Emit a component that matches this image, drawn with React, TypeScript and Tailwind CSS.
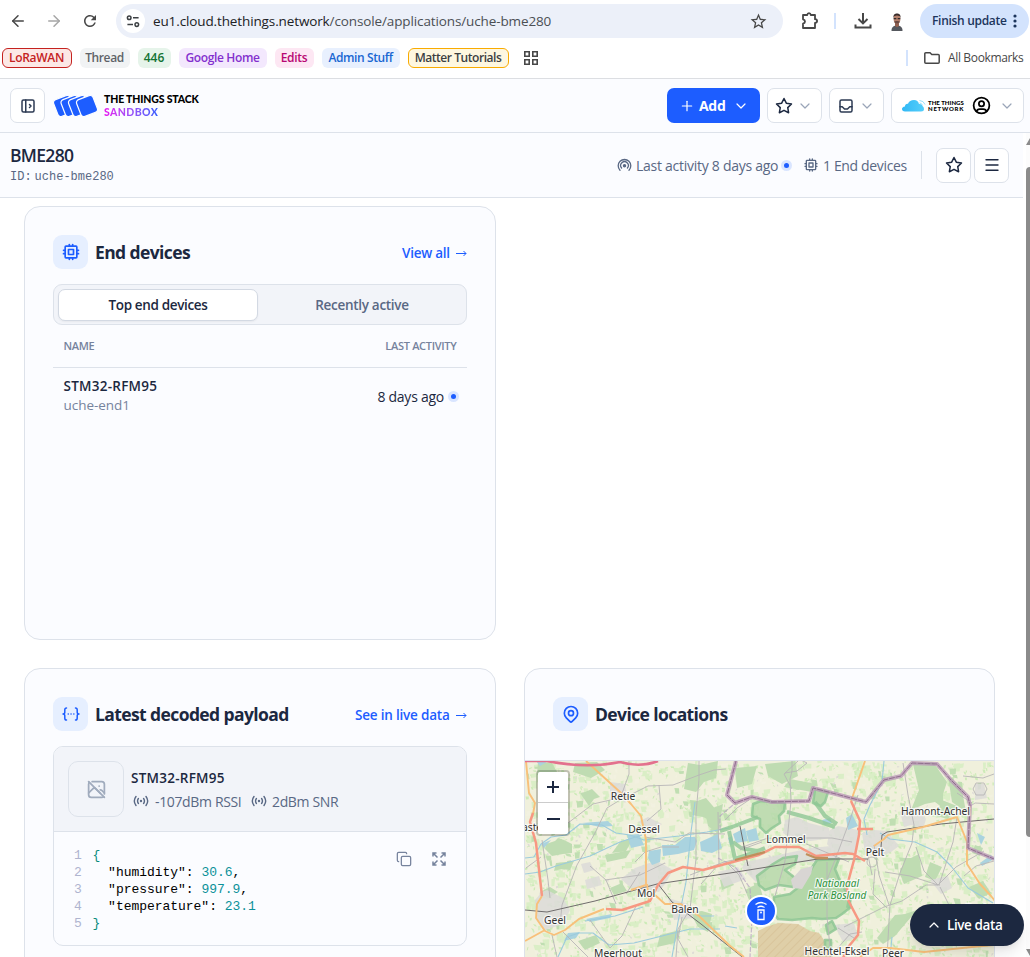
import React from "react";
import { ArrowLeft, ArrowRight, ChevronDown, ChevronUp, Copy, Menu, Plus } from "lucide-react";
import { TbCpu, TbInbox, TbLayoutSidebarLeftExpand, TbMapPin, TbPhotoOff, TbStar, TbUserCircle } from "react-icons/tb";
import { MdRefresh, MdStarBorder } from "react-icons/md";

const line = "border-[#dde2ea]";

function TuneIcon() {
  return (
    <svg width="14" height="14" viewBox="0 0 14 14" fill="none" stroke="#3c4043" strokeWidth="1.5">
      <circle cx="3.2" cy="3.8" r="1.8" />
      <path d="M7 3.8h5.6M1.4 10.6H7" />
      <circle cx="10.8" cy="10.6" r="1.8" />
    </svg>
  );
}

function Avatar() {
  return (
    <svg width="14" height="18" viewBox="0 0 14 18">
      <path d="M1.5 18c-.3-3 1.2-5 4-5.6h3c2.800.6 4.300 2.600 4 5.600z" fill="#55585e" />
      <path d="M5 9h4v4l-2 1.200L5 13z" fill="#93604f" />
      <ellipse cx="7" cy="6" rx="3.400" ry="4.700" fill="#b5806c" />
      <path d="M3.500 5C3 1.500 5 .4 7 .4s4 1.100 3.500 4.600L9.800 3.200Q7 2 4.200 3.200z" fill="#3a2c2b" />
      <path d="M3.700 5.700h2.600M7.700 5.700h2.600" stroke="#302a2c" strokeWidth="1.200" />
      <path d="M4.200 8.500c.8 3 4.800 3 5.600 0L8 8H6z" fill="#6b4a42" />
    </svg>
  );
}

function BrowserBar() {
  return (
    <div className="flex h-[42px] shrink-0 items-center">
      <div className="flex w-[116px] shrink-0 items-center">
        <ArrowLeft className="ml-[9px] text-[#474747]" size={18} strokeWidth={2} />
        <ArrowRight className="ml-[18px] text-[#a6a6a6]" size={18} strokeWidth={2} />
        <MdRefresh className="ml-[18px] text-[#474747]" size={18} />
      </div>
      <div className="flex h-[34px] w-[667px] shrink-0 items-center rounded-full bg-[#ecf0f9] pl-[5px]">
        <div className="flex h-6 w-6 items-center justify-center rounded-full bg-white"><TuneIcon /></div>
        <div className="ml-[8px] w-[596px] text-[13.500px] tracking-[-0.12px] whitespace-nowrap text-[#4b4f54]">
          <span className="text-[#202124]">eu1.cloud.thethings.network</span>/console/applications/uche-bme280
        </div>
        <MdStarBorder className="text-[#474747]" size={19} />
      </div>
      <svg className="ml-[18px] shrink-0" width="18" height="18" viewBox="0 0 18 18" fill="none" stroke="#474747" strokeWidth="1.800" strokeLinejoin="round">
        <path d="M2 3h4.200q.3-1.900 1.800-1.900T9.800 3H14v4.200q2.100.2 2.100 1.900T14 11v5H2v-4.300q2-.5 2-2.200T2 7.300z" />
      </svg>
      <div className="ml-[15px] h-4 w-[2px] shrink-0 bg-[#d3e3fd]" />
      <svg className="ml-[18px] shrink-0" width="18" height="18" viewBox="0 0 18 18" fill="none" stroke="#474747" strokeWidth="2">
        <path d="M9 1v10M4.500 7 9 11.400 13.500 7M1.500 12.500V15.500h15v-3" />
      </svg>
      <div className="ml-[18px] shrink-0 pt-[2px]"><Avatar /></div>
      <div className="ml-[16px] flex h-[34px] w-[109px] shrink-0 items-center rounded-full bg-[#d3e3fd] pl-3">
        <div className="w-[79px] text-[12px] tracking-[-0.3px] font-semibold whitespace-nowrap text-[#1c355c]">Finish update</div>
        <svg width="4" height="14" className="ml-[2px]" fill="#1c355c"><circle cx="2" cy="2" r="1.600" /><circle cx="2" cy="7" r="1.600" /><circle cx="2" cy="12" r="1.600" /></svg>
      </div>
    </div>
  );
}

const bookmarks: [string, string][] = [
  ["LoRaWAN", "w-[70px] border border-[#c5221f] bg-[#fce8e6] text-[#c5221f] tracking-[-0.3px]"],
  ["Thread", "w-[50px] bg-[#f1f3f4] text-[#5f6368] tracking-[-0.4px]"],
  ["446", "w-[33px] bg-[#e6f4ea] text-[#137333]"],
  ["Google Home", "w-[88px] bg-[#f3e8fd] text-[#8430ce] tracking-[-0.35px]"],
  ["Edits", "w-[39px] bg-[#fde7f3] text-[#b80672] tracking-[-0.3px]"],
  ["Admin Stuff", "w-[78px] bg-[#e8f0fe] text-[#1967d2] tracking-[-0.4px]"],
  ["Matter Tutorials", "w-[101px] border border-[#f9ab00] bg-[#fef7e0] text-[#3c4043] tracking-[-0.45px]"],
];

function Bookmarks() {
  return (
    <div className="flex h-[37px] shrink-0 items-start border-b border-[#dcdee2] pt-[6px] pl-[2px] text-[12px] whitespace-nowrap">
      <div className="flex gap-2 font-semibold">
        {bookmarks.map(([t, c]) => (
          <div key={t} className={"flex h-5 items-center justify-center rounded-[6px] pr-px " + c}>{t}</div>
        ))}
      </div>
      <svg className="mt-[3px] ml-[15px] shrink-0" width="14" height="14" fill="none" stroke="#474747" strokeWidth="1.600">
        <path d="M.8.8h4.400v4.400H.8zM8.800.8h4.400v4.400H8.800zM.8 8.800h4.400v4.400H.8zM8.800 8.800h4.400v4.400H8.800z" />
      </svg>
      <div className="mt-[2px] ml-[368px] h-4 w-[2px] bg-[#d3e3fd]" />
      <svg className="mt-[4px] ml-[16px]" width="16" height="12" fill="none" stroke="#474747" strokeWidth="1.500">
        <path d="M.8 1.800Q.8.8 1.800.8H6l1.800 1.700h6.400q1 0 1 1v6.700q0 1-1 1H1.800q-1 0-1-1z" />
      </svg>
      <div className="mt-px ml-[8px] w-[76px] tracking-[-0.35px] text-[#474747]">All Bookmarks</div>
    </div>
  );
}

function StackLogo() {
  return (
    <svg width="46" height="24" viewBox="0 0 46 24">
      <g fill="#1d5dff" stroke="#fbfcff" strokeWidth="1.200">
        {[11, 18.500, 26, 34].map((x) => (
          <rect key={x} x={x - 8.800} y="3" width="17.600" height="18" rx="3.200" transform={`rotate(-21 ${x} 12)`} />
        ))}
      </g>
    </svg>
  );
}

function Box({ className, children }: { className: string; children: React.ReactNode }) {
  return <div className={"flex h-[35px] shrink-0 items-center rounded-[7px] border border-[#dde2ea] bg-white " + className}>{children}</div>;
}

function AppHeader() {
  return (
    <div className={"flex h-[54px] shrink-0 items-center border-b bg-[#fbfcff] pl-[10px] " + line}>
      <Box className="w-[35px] justify-center text-[#2c3a53]"><TbLayoutSidebarLeftExpand size={18} /></Box>
      <div className="ml-[8px]"><StackLogo /></div>
      <div className="ml-[5px] w-[563px] font-['Lato'] text-[10.500px] leading-[12.500px] font-black whitespace-nowrap">
        <div className="tracking-[-0.15px] text-black">THE THINGS STACK</div>
        <div className="w-[56px] bg-linear-to-r from-[#e80cf0] to-[#1d5dff] bg-clip-text tracking-[0.400px] text-transparent">SANDBOX</div>
      </div>
      <div className="flex h-[35px] w-[93px] shrink-0 items-center rounded-[7px] bg-[#1d5dff] text-white">
        <Plus className="ml-[12px]" size={16} strokeWidth={1.800} />
        <div className="ml-[4px] w-[28px] text-[14px] font-bold tracking-[-0.3px]">Add</div>
        <ChevronDown className="ml-[6px]" size={16} strokeWidth={1.800} />
      </div>
      <Box className="ml-[7px] w-[55px] pl-[7px] text-[#1c2840]">
        <TbStar size={18} /><ChevronDown className="ml-[4px] text-[#9aa5b8]" size={16} strokeWidth={1.800} />
      </Box>
      <Box className="ml-[7px] w-[55px] pl-[7px] text-[#2c3a53]">
        <TbInbox size={18} /><ChevronDown className="ml-[4px] text-[#9aa5b8]" size={16} strokeWidth={1.800} />
      </Box>
      <Box className="ml-[7px] w-[133px] pl-[10px] text-black">
        <svg width="24" height="13" viewBox="0 0 24 13" className="shrink-0">
          <defs><linearGradient id="cloud"><stop stopColor="#31b8f5" /><stop offset="1" stopColor="#55cefa" /></linearGradient></defs>
          <path d="M3 12.500q-3-.2-3-2.500 0-2 3-2.500 0-3 3-2.800Q7.500 1 12 1q4 0 5 4 3-.3 3.500 2Q22 8 22 10q0 2.500-3 2.500z" fill="url(#cloud)" />
          <path d="M17.500 4q2.200 0 3 2.400M17.500 1.500q4.200.2 5.500 4" fill="none" stroke="#8fdcfb" strokeWidth=".9" />
        </svg>
        <div className="ml-[2px] w-[38px] font-['Lato'] text-[6px] leading-[6px] font-black whitespace-nowrap">
          <div className="tracking-[0.05px]">THE THINGS</div><div className="tracking-[0.75px]">NETWORK</div>
        </div>
        <TbUserCircle className="ml-[5px]" size={21} strokeWidth={2} />
        <ChevronDown className="ml-[7px] text-[#9aa5b8]" size={16} strokeWidth={1.800} />
      </Box>
    </div>
  );
}

function SubHeader() {
  return (
    <div className={"flex h-[65px] w-[1023px] shrink-0 items-center border-b bg-[#fbfcff] pl-[10px] text-[#596884] " + line}>
      <div className="w-[607px] pt-px">
        <div className="-mt-px pb-px text-[17.500px] leading-[22px] font-semibold tracking-[-0.7px] text-[#1c2840]">BME280</div>
        <div className="pt-px font-['Liberation_Mono'] text-[12px] leading-[18px]">ID:<span className="ml-[3px]">uche-bme280</span></div>
      </div>
      <BroadcastRound />
      <div className="ml-[4px] w-[143px] text-[14px] tracking-[-0.27px] whitespace-nowrap">Last activity 8 days ago</div>
      <Dot />
      <TbCpu className="ml-[11px]" size={16} />
      <div className="ml-[4px] w-[85px] text-[14px] tracking-[-0.35px] whitespace-nowrap">1 End devices</div>
      <div className="ml-[13px] h-7 w-px bg-[#dde2ea]" />
      <Box className="ml-[14px] w-[35px] justify-center text-[#1c2840]"><TbStar size={18} /></Box>
      <Box className="ml-[3px] w-[35px] justify-center text-[#1c2840]"><Menu size={18} strokeWidth={1.800} /></Box>
    </div>
  );
}

function BroadcastRound() {
  return (
    <svg width="15" height="14" viewBox="0 0 15 14" fill="none" stroke="#596884" strokeWidth="1.300" strokeLinecap="round">
      <path d="M3 12.200a6.300 6.300 0 1 1 9 0M4.600 10a3.800 3.800 0 1 1 5.800 0" />
      <circle cx="7.500" cy="7.800" r="1.100" fill="#596884" />
    </svg>
  );
}

function Dot() {
  return (
    <div className="ml-[2px] flex h-[11px] w-[11px] shrink-0 items-center justify-center rounded-full bg-[#d9e5ff]">
      <div className="h-[5px] w-[5px] rounded-full bg-[#1d5dff]" />
    </div>
  );
}

function CardTitle({ icon, title, link, linkClass }: { icon: React.ReactNode; title: string; link?: string; linkClass?: string }) {
  return (
    <div className="flex h-[34px] items-center justify-between">
      <div className="flex items-center">
        <div className="flex h-[34px] w-[35px] items-center justify-center rounded-[9px] bg-[#e6efff] text-[#1d5dff]">{icon}</div>
        <div className="ml-[7px] text-[17.500px] font-bold tracking-[-0.600px] whitespace-nowrap text-[#1c2840]">{title}</div>
      </div>
      {link && (
        <div className={"flex items-center justify-between pt-[2px] text-[13.500px] font-semibold whitespace-nowrap text-[#1d5dff] " + linkClass}>
          <span>{link}</span>
          <svg width="11" height="7" fill="none" stroke="#1d5dff"><path d="M0 3.500h10M7.500 1 10 3.500 7.500 6" /></svg>
        </div>
      )}
    </div>
  );
}

function EndDevices() {
  return (
    <div className={"h-[434px] rounded-[16px] border bg-[#fbfcff] p-[28px] " + line}>
      <CardTitle icon={<TbCpu size={20} />} title="End devices" link="View all" linkClass="w-[65px] tracking-[-0.25px]" />
      <div className={"mt-[15px] flex h-[41px] items-center rounded-[9px] border bg-[#f2f4f9] px-[4px] text-[13.500px] font-semibold " + line}>
        <div className="flex h-[32px] w-[200px] items-center justify-center rounded-[7px] border border-[#d3d9e3] bg-white pt-px tracking-[-0.35px] text-[#1c2840] shadow-xs">Top end devices</div>
        <div className="flex-1 pt-px pl-[4px] text-center tracking-[-0.3px] text-[#596884]">Recently active</div>
      </div>
      <div className={"flex h-[43px] items-center justify-between border-b px-[10.500px] text-[11px] font-semibold tracking-[-0.3px] text-[#76839d] " + line}>
        <span>NAME</span><span>LAST ACTIVITY</span>
      </div>
      <div className="flex items-center justify-between pt-[9px] pr-[8px] pl-[10.500px]">
        <div className="leading-[19.500px]">
          <div className="text-[13.500px] font-semibold tracking-[0.25px] text-[#1c2840]">STM32-RFM95</div>
          <div className="-mt-px text-[13.500px] tracking-[-0.05px] text-[#76839d]">uche-end1</div>
        </div>
        <div className="flex items-center text-[14px] tracking-[-0.25px] text-[#1c2840]"><span className="mr-[2px]">8 days ago</span><Dot /></div>
      </div>
    </div>
  );
}

function Signal() {
  return (
    <svg width="16" height="12" viewBox="0 0 16 12" fill="none" stroke="#596884" strokeWidth="1.400" strokeLinecap="round">
      <path d="M3 1.500Q-.4 6 3 10.500M13 1.500q3.400 4.500 0 9M5.400 3.500q-1.700 2.500 0 5M10.600 3.500q1.700 2.500 0 5" />
      <circle cx="8" cy="6" r=".5" />
    </svg>
  );
}

function BracesIcon() {
  return (
    <svg width="18" height="14" viewBox="0 0 18 14" fill="none" stroke="#1d5dff" strokeWidth="1.500" strokeLinecap="round" strokeLinejoin="round">
      <path d="M4.500 1Q2.800 1 2.800 2.800v2.400Q2.800 7 1 7q1.800 0 1.800 1.800v2.400Q2.800 13 4.500 13M13.500 1q1.700 0 1.700 1.800v2.400Q15.200 7 17 7q-1.800 0-1.800 1.800v2.400q0 1.800-1.700 1.800M6.200 7h.1M9 7h.1M11.800 7h.1" />
    </svg>
  );
}

const payload: [string, string][] = [["humidity", "30.6"], ["pressure", "997.9"], ["temperature", "23.1"]];

function Payload() {
  return (
    <div className={"h-[320px] rounded-[16px] border bg-[#fbfcff] p-[28px] " + line}>
      <CardTitle icon={<BracesIcon />} title="Latest decoded payload" link="See in live data" linkClass="w-[112px] tracking-[-0.2px]" />
      <div className={"mt-[15px] h-[200px] overflow-hidden rounded-[10px] border " + line}>
        <div className={"flex h-[85px] items-center border-b bg-[#f2f4f9] pl-[14px] " + line}>
          <div className={"flex h-[56px] w-[56px] items-center justify-center rounded-[10px] border text-[#a0abbd] " + line}><TbPhotoOff size={21} /></div>
          <div className="ml-[7px] pt-px leading-[23px]">
            <div className="text-[13.500px] font-semibold tracking-[0.25px] text-[#1c2840]">STM32-RFM95</div>
            <div className="flex items-center text-[14px] tracking-[-0.35px] whitespace-nowrap text-[#596884]">
              <span className="ml-[2px]"><Signal /></span><span className="ml-[6px] w-[87px]">-107dBm RSSI</span>
              <span className="ml-[9px]"><Signal /></span><span className="ml-[5px]">2dBm SNR</span>
            </div>
          </div>
        </div>
        <div className="flex justify-between pt-[15px] pr-[20px] pl-[20px]">
          <div className="font-['Liberation_Mono'] text-[13px] leading-[17px] tracking-[-0.03px] whitespace-pre text-black">
            <div><span className="text-[#afb4cf]">1 </span><span className="ml-[3px] text-[#098c7c]">{"{"}</span></div>
            {payload.map(([k, v], i) => (
              <div key={k}>
                <span className="text-[#afb4cf]">{i + 2} </span>
                <span className="ml-[3px]">{`  "${k}": `}</span>
                <span className="text-[#0b9199]">{v}</span>{i < 2 ? "," : ""}
              </div>
            ))}
            <div><span className="text-[#afb4cf]">5 </span><span className="ml-[3px] text-[#098c7c]">{"}"}</span></div>
          </div>
          <div className="mt-[4px] flex h-[16px] items-center gap-[20px] text-[#76839d]">
            <Copy size={16} strokeWidth={1.900} />
            <svg width="14" height="14" viewBox="0 0 14 14" fill="none" stroke="#76839d" strokeWidth="1.500">
              <path d="M1 4.500V1h3.500M9.500 1H13v3.500M13 9.500V13H9.500M4.500 13H1V9.500M1 1l4.500 4.500M13 1 8.500 5.500M13 13 8.500 8.500M1 13l4.500-4.500" />
            </svg>
          </div>
        </div>
      </div>
    </div>
  );
}

function scatter(seed: number, count: number, min: number, max: number) {
  let s = seed;
  const r = () => ((s = (s * 16807) % 2147483647) / 2147483647);
  let d = "";
  for (let i = 0; i < count; i++) {
    const x = 525 + r() * 470, y = 761 + r() * 196, w = min + r() * (max - min), h = min + r() * (max - min), k = r() * 2 - 1;
    d += `M${x.toFixed(1)} ${y.toFixed(1)}l${w.toFixed(1)} ${k.toFixed(1)}l${k.toFixed(1)} ${h.toFixed(1)}l${(-w * 0.8).toFixed(1)} ${(-k).toFixed(1)}z`;
  }
  return d;
}

const places: [string, number, number][] = [
  ["Retie", 623, 800], ["Dessel", 644, 833], ["Lommel", 786, 843], ["Hamont-Achel", 935.5, 815], ["Pelt", 875, 856],
  ["Mol", 646, 897], ["Balen", 685, 913], ["Geel", 555, 924], ["Meerhout", 618, 957], ["Hechtel-Eksel", 837, 955], ["Peer", 893, 957],
  ["Bocholt", 984, 912],
];

const frontier = "M736 761l-9 34 8 8 17-6 20 5 37-1 4-13 53 14 18-22 17-4 11-13 25 1 14 16 17 17 2 8-2 43 26 11";
const heath = "M758 931l8-4 12-4 20 1 12 7 9 2 10 14 3 10h-74z";

function MapView() {
  return (
    <svg className="block" width="469" height="196" viewBox="525 761 469 196" fill="none" strokeLinejoin="round">
      <defs>
        <pattern id="hatch" width="6" height="6" patternUnits="userSpaceOnUse" patternTransform="rotate(45)"><path d="M0 0v6" stroke="#c9a97a" strokeWidth=".6" /></pattern>
      </defs>
      <path d="M525 761h470v196H525z" fill="#f0f0dc" />
      <path d={scatter(71, 1100, 2, 8)} fill="#daeec6" />
      <path d={scatter(915, 700, 1.500, 5)} fill="#f2f1e0" />
      <path d={scatter(4407, 1200, 1, 3.500)} fill="#cdebb8" />
      <path d={scatter(33, 130, 2, 7)} fill="#c0deb2" />
      <path d={scatter(619, 160, 1, 2.500)} fill="#dedbd6" />
      <g fill="#bfdcb2">
        <path d="M575 763l22-1 8 8-14 8-18-6zM546 844l9-3 3-3 6 2 8 4 0 9-9 1-11 2-7-7zM556 863l10-1 8-1-4 9-9-1-7 2zM580 793l5-1 7-3 8 8-6 2-5 7zM688 763l12 2 18-4-2 17-12 4-8 10-12-3 2-14zM690 800l7 1 9-3 12 14-6 9-9-4-11-2zM705 811l18-7-5 30-10-8zM735 768l22-2-5 18-15 4zM765 764l30-3 3 15-16 8-14-8zM605 855l26-5-5 8-19 4zM620 842l14-5-8 14-14 2zM538 762l14 1 5 9-8 6-12-3z" />
        <path d="M790 779l26 5-4 8-28-5zM913 764l20-2 14 20-4 12 0 14-8-6-10 2-14 6 8-20zM942 800l15 6-9 13-12-3zM905 858l6 0 8-4 3 22-18 8-4-10zM895 915l10-1 12-4-22 26-12 8-6-6zM930 862l12 5-7 14-10-4zM948 776l14 14 4 22-14-10zM969 887l14-6 8 12-12 6zM975 845l8 3-3 8-8-3z" />
        <path d="M540 892l10-5 8 5-10 6zM660 935l20-5-5 13-18 4zM578 941l18-6 4 8-15 7zM690 912l12-1 10 3-4 18-10-5zM610 888l12-5 5 8-13 4zM745 890l14-7 4 14-14 3zM720 880l9-4 5 9-12 5z" />
      </g>
      <g fill="#dcdad8" fillOpacity=".85">
        <path d="M745 862l20-4 18-4 28-6 20-2 6 12-16 4-25 0-22 6-8-2 0 10-10 6-14-14zM785 820l12-3 12 6 20 5 2 10-20 3-18-2-10-6zM830 830l8-4 20 4-1 24-20 2-10-12zM535 900l7-8 5-2 8 4 8 4 7 12-4 8-3 6-18 6-9-12zM610 782l15 2 2 13-17 3zM635 868l14-5 10-1 14 8-8 14-6 8-18-2-10-2-10-9zM668 898l20 6 6 14-20 2zM718 872l20-5 8 12-22 8zM900 812l10-3 8-2 8 12-3 10-12-4-7 2zM862 833l12-3 13 1 12 15-8 6-10 5-16-4zM930 880l18-4 4 12-11 6zM585 880l14-4 3 9-15 4zM638 822l10-5 14 7-9 8zM834 925l20-2 4 14-15 5zM975 784h9l3 14-12 2zM581 864l9-2 4 8-10 3z" />
      </g>
      <g fill="#aad3df">
        <path d="M627 835l12-1 5 11-13 3zM649 851l12-2-1 13-8 3-4-7zM662 845l13 0 10-8 10 0 2 4-3 9-16 4-15 2zM700 842l18-8 4 14-10 5-11-2zM733 834l12-6 3 13-12 2zM746 831l10-3 3 12-10 2zM728 838l4-2 2 8-4 1zM846 818l6-4 6 12-10 4zM822 820l8-2 2 5-8 2zM816 861l7-2-3 7-5-1zM582 823l26-2 5 5-13 1zM536 761l11 1-7 4zM977 833l4 12 4-8zM980 863l11-8 3 4-12 7z" />
        <path d="M568 933l12-1-4 6-12 3zM586 919l26-5-2 4-20 4zM541 844l10-4-7 8z" />
      </g>
      <g stroke="#9ccbdc" strokeWidth="1.100">
        <path d="M525 858l9-1 7-13 10-7 15-2 14-11 22 1 14 8 14 2 14 5 35-4 28-4 22-4M525 874l15-2 16-6 34-10 30-14 22-7" />
        <path d="M558 957l9-20 12-4 14 0 16 12 25-2 24-6 32-8 30 0M585 921l30-5 28-9M672 957l6-35 8-40 5-50 4-30M867 835l-3-16 6-14 12-23 2-21M880 833l10 6 25 3 22 10 14 14 17 22 25 15M890 957l2-20M725 926l12 2M700 916l14 0" />
      </g>
      <path d={heath} fill="#dfcfa8" />
      <path d={heath} fill="url(#hatch)" />
      <g fill="#b3d7a8" stroke="#8fc795" strokeWidth="2.600" strokeOpacity=".85">
        <path d="M774 897l16-3 10-8 8-11 5-9 4-6 22-1-4 10 5 12 8 14 3 12-9 7-6 4-14 1-10-1-20 2-14-1-4-6z" />
        <path d="M757 876l16-12 10-6 14-2-2 8-10 6 10 8-2 9-14-2-14 5-6-5z" fillOpacity=".8" />
        <path d="M753 804l8-3 24 2-1 8-5 5 1 7-8 5-6 5-6-6 0-8-8-3z" fillOpacity=".8" />
        <path d="M815 789l13 3-3 10-4 4-8-3z" />
        <path d="M826 925l6-4 4 8-8 5zM825 940l6 0 0 8-6 2z" />
      </g>
      <g stroke="#8fc795" strokeWidth="4" strokeOpacity=".8">
        <path d="M720 831l12-4 26-10M729 831l6 28 18-6 12-5M733 842l8 6 16 3M787 812l22 6 26 9M815 802l10 14 12 8M850 898l-2 10" />
      </g>
      <path d="M791 880l10-11 12-3-2 8-9 15-9-1z" fill="#d8d5d3" />
      <g stroke="#b8b6b7" strokeWidth=".9">
        <path d="M620 800l-13 8-12 25-18 32-15 40-2 20M629 761v13l-9 25M620 800l28-14 25-1 26-10 15-5 12-1M568 823l25-19 26-6M542 840l6 40 2 18M526 868l15-11M590 866l16 14 10 24M605 880l35-5 25-12M699 761v18l-3 35 0 45-6 50-12 20-2 28M659 785l2 24-14 12M718 812l1 52-18 20M645 837l30 5 14-9 36 1M690 875l34-13 36-7M552 935l5 22M563 932l25 25M590 920l20 28 12-12 14-30M682 917l-4 22 10 18M725 861l14 14 8 18M740 850l22-8M725 820l12-12 12-8M635 862l10-10 16-5 18 0M640 872l-14 22" />
        <path d="M792 761v10l-2 8 1 22-4 40-2 20-10 35M785 773l12-2 10-8-6-3M903 763l5 32 6 30-2 18-12 30-10 32-3 52M792 789l-8-15 14-13M858 795l-8 25-15 40-8 20M797 840l52 22M799 838h33l20 4M740 848l28-10 20 2M885 872l25 4 28 9 18-18 28-16M940 885l-14 0-24 16-18 6-20 10-20 10M874 845l5 30 10 30M938 885l-14-14-8-24M868 855l4 20M957 817l-4 25-14 43M940 887l10 20M887 908l-14-14 2-25M830 957l20-23 12-2M838 928l16 10M827 862v55l3 30M964 876l12-10 18-5M957 815l18-12 19 1M972 803l-15-10M963 776l20 2 11-4" />
        <circle cx="872" cy="862" r="5" /><path d="M976 783h8l3 6-3 6h-8l-3-6z" />
      </g>
      <path d="M720 830v-14l14-12M718 858l18 10 14 20 2 30-2 39" stroke="#b49fc0" strokeOpacity=".7" strokeWidth="1.200" strokeDasharray="5 1.500" />
      <g stroke="#706d6d" strokeWidth="1">
        <path d="M525 910l22 2 48-11 62-17 73-11 50-8 38-6 50 0M658 884l14 18 29 22 45 36M881 847l1-12 5-3 54-8 53-5M740 826l8 40" />
      </g>
      <g stroke="#f8c07a" strokeWidth="1.900">
        <path d="M526 761l3 32 6 10-2 11M542 896l-5 8-1 14 9 13 9 4 11-5 14-11 25-10M525 941l20-11M586 761l34 31 11 12 10 12 5 24v45M646 885l-15 5M647 884l2 17M655 895l10 9h16l18 12 30 29 15 12M865 761l-14 40M874 846l10-7 4-4 35-8 34-10 10 25v22l13 20 11 12 4 5M860 957l13-9 17 0 34 4 48-5 22-2" />
      </g>
      <g stroke="#f79882" strokeWidth="2.500">
        <path d="M533 813l-3 9 6 21 6 53M606 909l16 1 28-9 8-16 10-12 15-6 20 3 26-7 30-8 16-8h24l17 9 29-3 8 1 12 7M851 801l9 20-1 14-5 25-7 26 1 14 11 21-1 14-9 11-6 12M857 829l16 0" />
      </g>
      <path d="M735 860l30-8M806 854l10 4 12 0" stroke="#bf8f5c" strokeWidth="2.300" />
      <path d="M525 761h22q40 8 73 1 20 6 38-1" stroke="#e3718e" strokeWidth="2.600" />
      <path d={frontier} stroke="#b997b7" strokeWidth="4" strokeOpacity=".8" />
      <path d={frontier} stroke="#8a6888" strokeWidth=".9" strokeDasharray="6 1" />
      <g fontFamily="Noto Sans, sans-serif" fontSize="10.300" textAnchor="middle" stroke="#ffffff" strokeOpacity=".75" strokeWidth="2.500" paintOrder="stroke">
        {places.map(([n, x, y]) => <text key={n} x={x} y={y} fill="#333333">{n}</text>)}
        <text x="522" y="831" textAnchor="start" fill="#333333">aste</text>
        <g fill="#2c923c" fontStyle="italic" fontSize="10"><text x="837" y="887">Nationaal</text><text x="837" y="899">Park Bosland</text></g>
      </g>
    </svg>
  );
}

function Locations() {
  return (
    <div className={"h-[320px] overflow-hidden rounded-[16px] border bg-[#fbfcff] " + line}>
      <div className={"h-[92px] border-b px-[28px] pt-[28px] " + line}>
        <CardTitle icon={<TbMapPin size={20} />} title="Device locations" />
      </div>
      <div className="relative">
        <MapView />
        <div className="absolute top-[9px] left-[11px] w-[34px] rounded-[4px] border-2 border-black/20 bg-clip-padding">
          <div className="flex h-[31px] items-center justify-center rounded-t-[2px] border-b border-[#cccccc] bg-white"><svg width="14" height="14" stroke="#1c2840" strokeWidth="2"><path d="M1 7h12M7 1v12" /></svg></div>
          <div className="flex h-[31px] items-center justify-center rounded-b-[2px] bg-white"><svg width="14" height="14" stroke="#1c2840" strokeWidth="2"><path d="M1 7h13" /></svg></div>
        </div>
        <div className="absolute top-[134px] left-[220px] flex h-[32px] w-[32px] items-center justify-center rounded-full border-2 border-white bg-[#1d5dff]">
          <svg width="14" height="20" viewBox="0 0 14 20" fill="none" stroke="white" strokeWidth="1.300">
            <path d="M1.500 3.500q5.500-4 11 0M3.500 6.500q3.500-2.500 7 0M4 9h6v9.500H4z" /><circle cx="7" cy="11.500" r=".4" />
          </svg>
        </div>
      </div>
    </div>
  );
}

export default function App() {
  return (
    <div className="relative flex h-[957px] w-[1030px] flex-col overflow-hidden bg-white font-['Open_Sans','Noto_Sans',sans-serif]">
      <BrowserBar />
      <Bookmarks />
      <AppHeader />
      <SubHeader />
      <div className="grid grid-cols-[472px_471px] gap-x-[28px] gap-y-[28px] pt-[8px] pl-[24px]">
        <EndDevices />
        <div />
        <Payload />
        <Locations />
      </div>
      <div className="absolute top-[133px] right-0 h-[824px] w-[4px] overflow-hidden bg-[#fcfcfc]">
        <svg width="4" height="824" fill="#8b8b8b"><path d="M0 12 4 5v7zM0 38q0-4 4-4v670q-4 0-4-4zM0 816h4v7z" /></svg>
      </div>
      <div className="absolute top-[904px] left-[910px] flex h-[42px] w-[114px] items-center rounded-[21px] bg-[#1c2840] pl-[16px] text-white shadow-lg">
        <ChevronUp size={16} strokeWidth={1.800} />
        <div className="ml-[5px] pt-px text-[13.500px] font-semibold tracking-[-0.4px] whitespace-nowrap">Live data</div>
      </div>
    </div>
  );
}
